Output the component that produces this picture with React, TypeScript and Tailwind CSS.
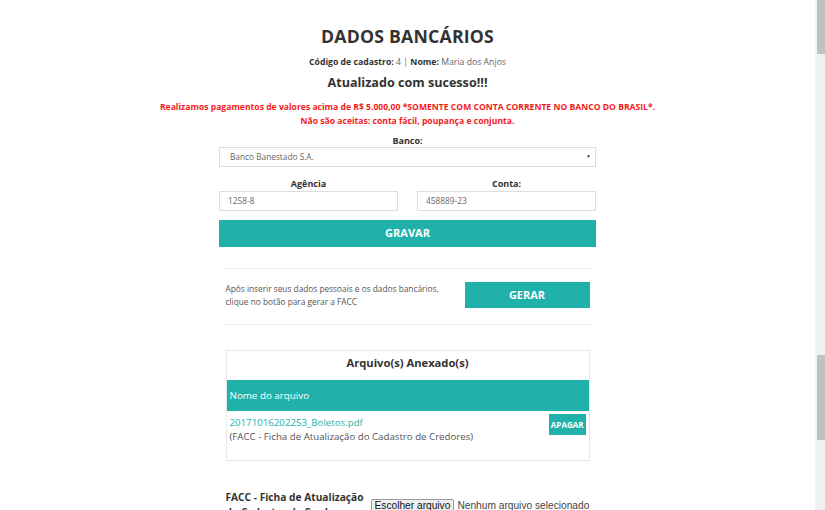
import React from "react";

const teal = "bg-[#20b2aa]";

const App: React.FC = () => {
    return (
        <div className="flex h-[510px] w-[825px] overflow-hidden bg-white text-[#555]" style={{ fontFamily: '"Open Sans", sans-serif' }}>
            <div className="flex-1">
                <div className="flex flex-col items-center">
                    <h1 className="mt-[25px] text-[17.7px] font-bold leading-[22px] tracking-[0.2px] text-[#333]">DADOS BANCÁRIOS</h1>
                    <p className="mt-[9px] text-[8.7px] leading-[12px] text-[#666]">
                        <b className="font-bold text-[#333]">Código de cadastro:</b> 4 | <b className="font-bold text-[#333]">Nome:</b> Maria dos Anjos
                    </p>
                    <h2 className="mt-[6px] text-[12.6px] font-bold leading-[18px] text-[#333]">Atualizado com sucesso!!!</h2>
                    <div className="mt-[8px] text-center text-[8.6px] font-bold leading-[14px] text-[#f41c1c]">
                        <p>Realizamos pagamentos de valores acima de R$ 5.000,00 *SOMENTE COM CONTA CORRENTE NO BANCO DO BRASIL*.</p>
                        <p>Não são aceitas: conta fácil, poupança e conjunta.</p>
                    </div>
                </div>

                {/* dados bancários */}
                <div className="mx-auto mt-[7px] w-[377px]">
                    <label className="block text-center text-[9px] font-bold leading-[12px] text-[#333]">Banco:</label>
                    <div className="flex h-[20px] items-center justify-between border border-[#ddd] pl-[10px] pr-[4px] text-[8.3px] text-[#666]">
                        <span>Banco Banestado S.A.</span>
                        <span className="text-[5px] text-[#444]">▼</span>
                    </div>
                    <div className="mt-[11px] grid grid-cols-2 gap-[19px]">
                        <div>
                            <label className="block text-center text-[9px] font-bold leading-[12px] text-[#333]">Agência</label>
                            <div className="mt-[1px] flex h-[20px] items-center border border-[#ddd] px-[8px] text-[8.3px] text-[#666]">1258-8</div>
                        </div>
                        <div>
                            <label className="block text-center text-[9px] font-bold leading-[12px] text-[#333]">Conta:</label>
                            <div className="mt-[1px] flex h-[20px] items-center border border-[#ddd] px-[8px] text-[8.3px] text-[#666]">458889-23</div>
                        </div>
                    </div>
                    <button className={`mt-[9px] flex h-[27px] w-full items-center justify-center ${teal} text-[11px] font-bold text-white`}>GRAVAR</button>
                </div>

                {/* gerar facc */}
                <div className="mx-auto mt-[21px] w-[364px] border-y border-[#eee]">
                    <div className="flex items-center justify-between pb-[16px] pt-[13px]">
                        <p className="w-[225px] text-[8.3px] leading-[13px]">
                            Após inserir seus dados pessoais e os dados bancários, clique no botão para gerar a FACC
                        </p>
                        <button className={`flex h-[26px] w-[125px] items-center justify-center ${teal} text-[11px] font-bold text-white`}>GERAR</button>
                    </div>
                </div>

                {/* anexos */}
                <div className="mx-auto mt-[25px] h-[111px] w-[364px] border border-[#e8e8e8]">
                    <h3 className="pb-[10px] pt-[5px] text-center text-[11.2px] font-bold leading-[14px] text-[#333]">Arquivo(s) Anexado(s)</h3>
                    <div className={`flex h-[31px] items-center ${teal} px-[3px] pt-[2px] text-[9.8px] text-white`}>Nome do arquivo</div>
                    <div className="flex justify-between pl-[3px] pr-[3px] pt-[3px]">
                        <div className="pt-[2px] text-[9.7px] leading-[14px]">
                            <a className="text-[#20b2aa]">20171016202253_Boletos.pdf</a>
                            <p>(FACC - Ficha de Atualização do Cadastro de Credores)</p>
                        </div>
                        <button className={`h-[21px] px-[2px] ${teal} text-[8px] font-bold text-white`}>APAGAR</button>
                    </div>
                </div>

                {/* upload */}
                <div className="mx-auto mt-[29px] flex w-[364px] items-start">
                    <p className="w-[145px] shrink-0 whitespace-nowrap text-[10.2px] font-bold leading-[15px] text-[#333]">
                        FACC - Ficha de Atualização
                        <br />
                        do Cadastro de Credores
                    </p>
                    <div className="mt-[8px] flex items-center whitespace-nowrap text-[10.2px]" style={{ fontFamily: '"Liberation Sans", Arial, sans-serif' }}>
                        <span className="rounded-[2px] border border-[#999] bg-[#efefef] px-[3px] leading-[12px] text-[#111]">Escolher arquivo</span>
                        <span className="ml-[3px] text-[#444]">Nenhum arquivo selecionado</span>
                    </div>
                </div>
            </div>

            {/* barra de rolagem */}
            <div className="flex w-[10px] flex-col bg-[#f1f1f1] pl-[2px]">
                <div className="h-[54px] bg-[#c1c1c1]"></div>
                <div className="mt-[301px] h-[85px] bg-[#c1c1c1]"></div>
            </div>
        </div>
    );
};

export default App;
